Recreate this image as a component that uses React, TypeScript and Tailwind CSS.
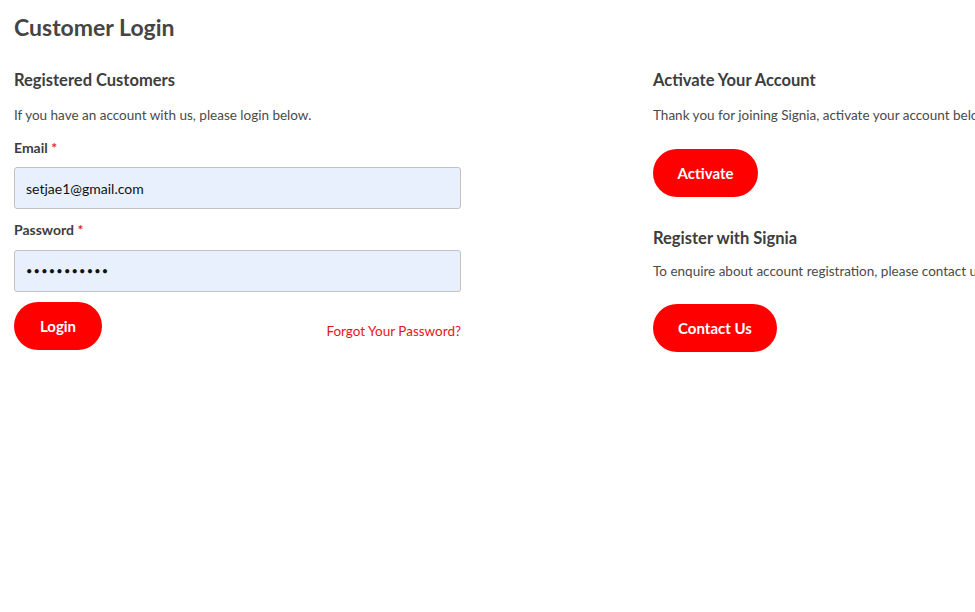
import React from "react";

export default function App() {
  return (
    <div className="w-[975px] h-[612px] overflow-hidden bg-white" style={{ fontFamily: "Lato, 'Open Sans', sans-serif" }}>
      <div className="w-[1300px] pl-[14px]">
        <h1 className="text-[23px] font-bold text-[#454545] leading-[28px] pt-[13px]">Customer Login</h1>
        <div className="flex mt-[28px]">
          <div className="w-[447px]">
            <h2 className="text-[16.5px] font-bold text-[#3d3d3d] leading-[22px]">Registered Customers</h2>
            <p className="text-[13.5px] text-[#4a4a4a] leading-[20px] mt-[14px]">If you have an account with us, please login below.</p>
            <label className="block text-[14px] font-bold text-[#3d3d3d] leading-[20px] mt-[13px]">
              Email <span className="text-[#e02b27]">*</span>
            </label>
            <div className="mt-[9px] h-[42px] rounded-[3px] border border-[#c2c2c2] bg-[#e8f0fe] flex items-center px-[11px] text-[14px] text-[#111]">
              setjae1@gmail.com
            </div>
            <label className="block text-[14px] font-bold text-[#3d3d3d] leading-[20px] mt-[11px]">
              Password <span className="text-[#e02b27]">*</span>
            </label>
            <div className="mt-[10px] h-[42px] rounded-[3px] border border-[#c2c2c2] bg-[#e8f0fe] flex items-center px-[11px] text-[11px] text-[#111] tracking-[1.2px]">
              •••••••••••
            </div>
            <div className="flex items-start justify-between mt-[10px]">
              <button className="w-[88px] h-[48px] rounded-full bg-[#ff0000] text-white text-[15px] font-bold">Login</button>
              <a className="text-[13.5px] text-[#e8141b] mt-[19px] leading-[20px]">Forgot Your Password?</a>
            </div>
          </div>
          <div className="ml-[192px]">
            <h2 className="text-[16.5px] font-bold text-[#3d3d3d] leading-[22px]">Activate Your Account</h2>
            <p className="text-[13.5px] text-[#4a4a4a] leading-[20px] mt-[14px] whitespace-nowrap">Thank you for joining Signia, activate your account below.</p>
            <button className="mt-[24px] w-[105px] h-[48px] rounded-full bg-[#ff0000] text-white text-[15px] font-bold">Activate</button>
            <h2 className="text-[16.5px] font-bold text-[#3d3d3d] leading-[22px] mt-[30px]">Register with Signia</h2>
            <p className="text-[13.5px] text-[#4a4a4a] leading-[20px] mt-[12px] whitespace-nowrap">To enquire about account registration, please contact us.</p>
            <button className="mt-[23px] w-[124px] h-[48px] rounded-full bg-[#ff0000] text-white text-[15px] font-bold">Contact Us</button>
          </div>
        </div>
      </div>
    </div>
  );
}
